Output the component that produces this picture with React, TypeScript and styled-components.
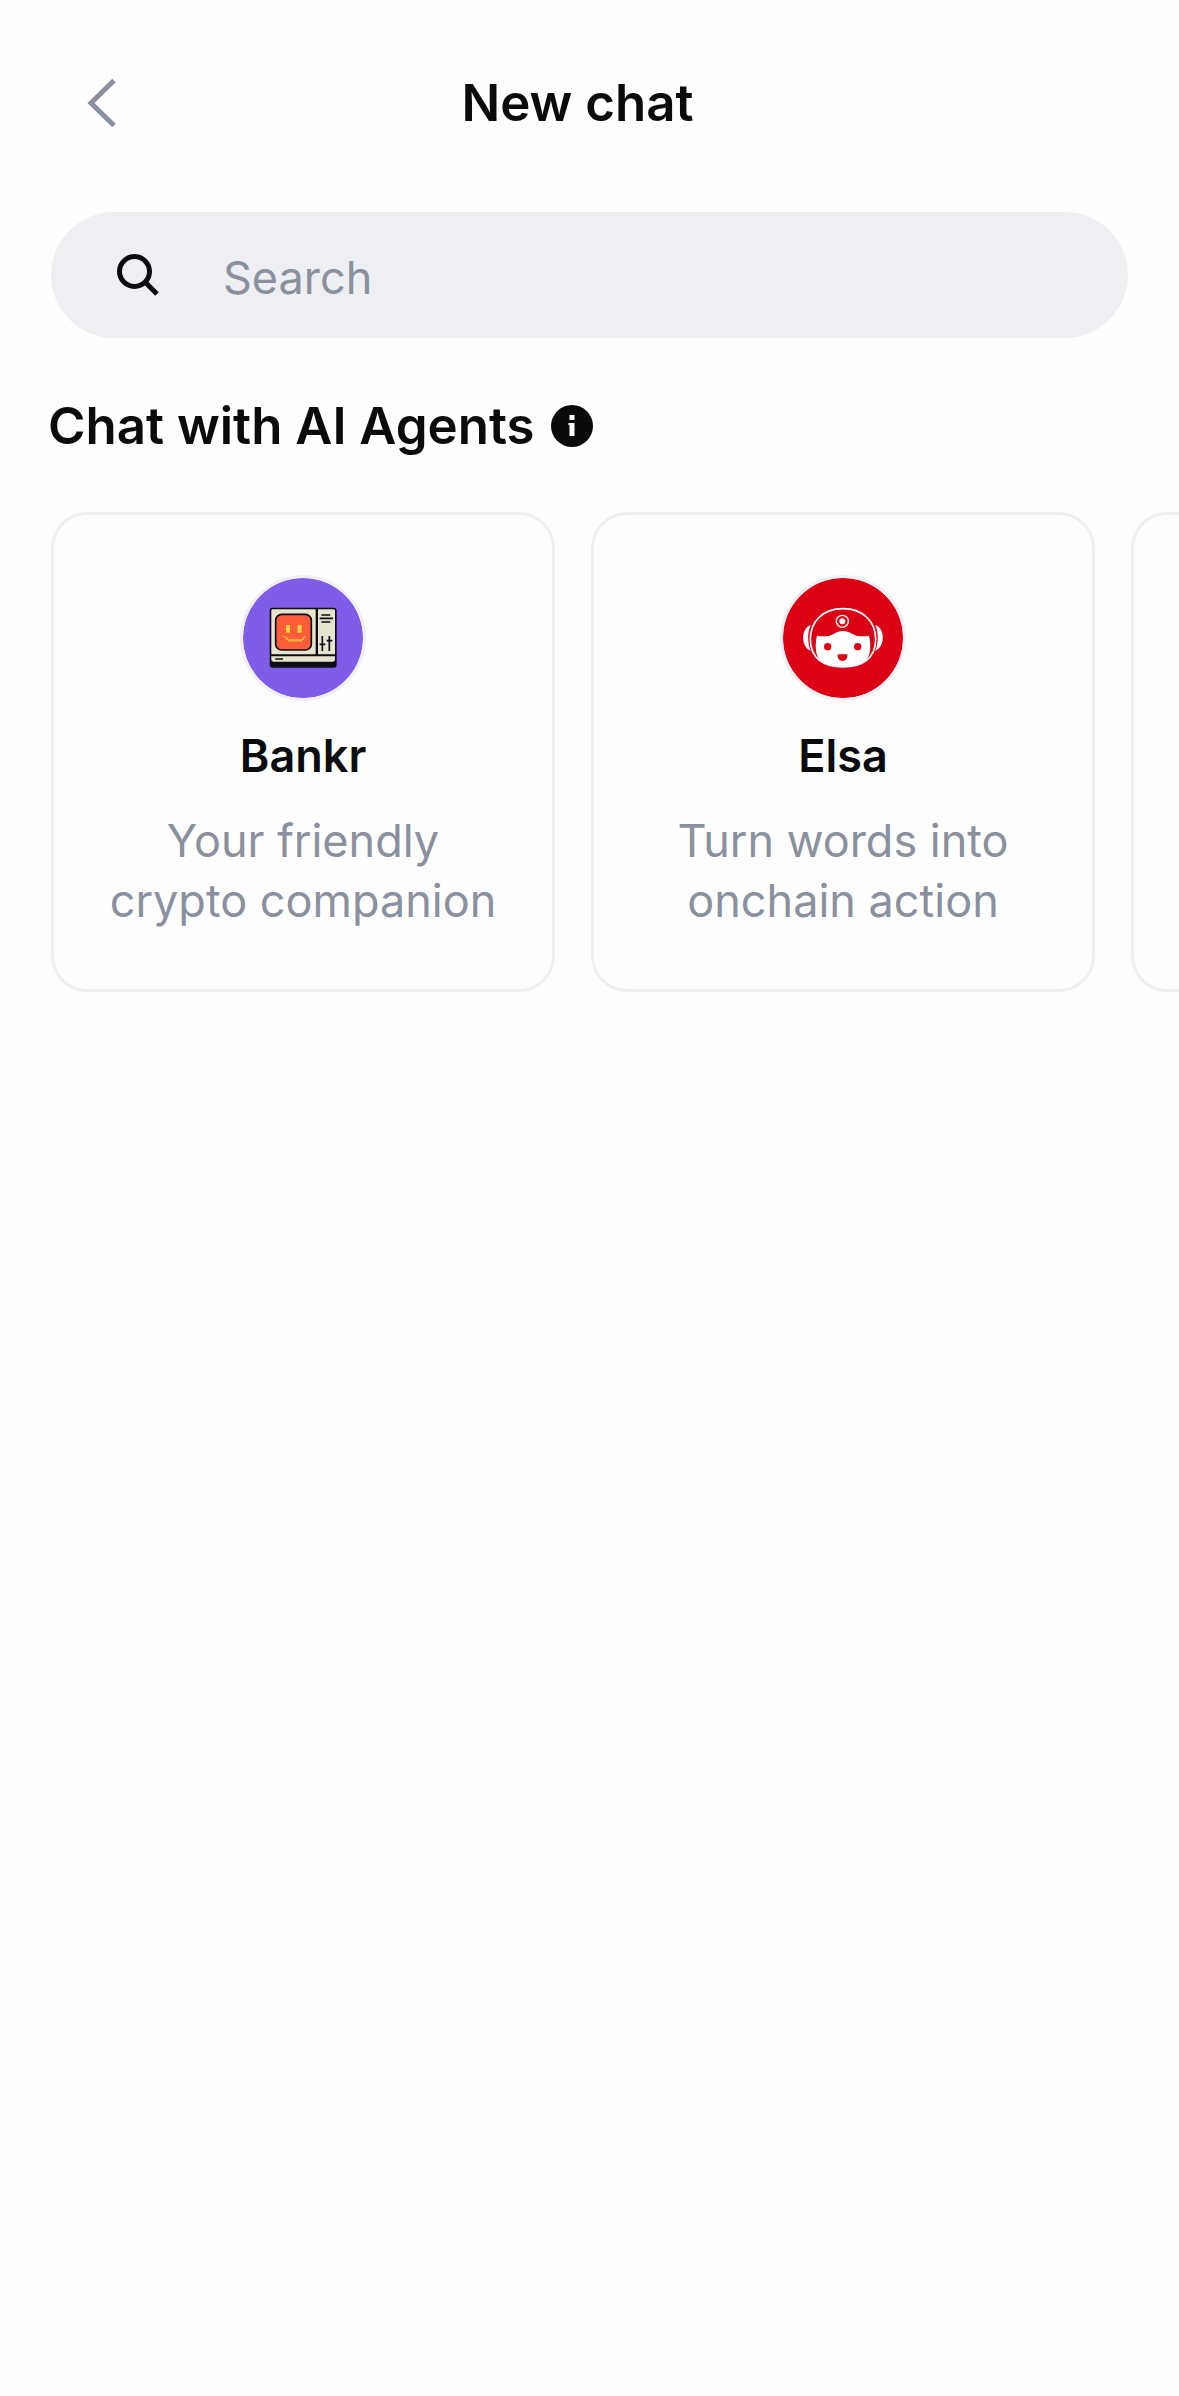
import React, { useState } from "react";
import styled, { createGlobalStyle } from "styled-components";

const GlobalStyle = createGlobalStyle`
  * {
    box-sizing: border-box;
  }

  body {
    margin: 0;
    background: #fefefe;
    color: #0a0b0d;
    font-family: Inter, "Liberation Sans", sans-serif;
    overflow-x: hidden;
  }
`;

const Page = styled.main`
  display: flex;
  flex-direction: column;
`;

const Header = styled.header`
  display: flex;
  align-items: center;
  padding: 70px 75px 76px 51px;
`;

const BackButton = styled.button`
  display: flex;
  align-items: center;
  justify-content: center;
  width: 102px;
  height: 66px;
  padding: 0;
  border: none;
  background: none;
  cursor: pointer;
`;

const Title = styled.h1`
  flex: 1;
  margin: 0;
  padding-right: 102px;
  font-size: 51px;
  line-height: 66px;
  font-weight: 600;
  text-align: center;
`;

const SearchBar = styled.label`
  display: flex;
  align-items: center;
  gap: 64px;
  height: 126px;
  margin: 0 51px;
  padding: 0 66px;
  border-radius: 63px;
  background: #eeeff3;
`;

const SearchInput = styled.input`
  flex: 1;
  min-width: 0;
  padding: 6px 0 0;
  border: none;
  background: none;
  color: #0a0b0d;
  font-family: inherit;
  font-size: 45px;
  line-height: 60px;

  &::placeholder {
    color: #8a909e;
    opacity: 1;
  }

  &:focus {
    outline: none;
  }
`;

const SectionHeader = styled.div`
  display: flex;
  align-items: center;
  gap: 16px;
  padding: 55px 48px 53px;
`;

const SectionTitle = styled.h2`
  margin: 0;
  font-size: 51px;
  line-height: 66px;
  font-weight: 600;
`;

const InfoButton = styled.button`
  display: flex;
  padding: 0;
  border: none;
  background: none;
  cursor: pointer;
`;

const AgentList = styled.ul`
  display: flex;
  gap: 36px;
  margin: 0;
  padding: 0 51px;
  list-style: none;
  overflow-x: auto;
  scrollbar-width: none;
`;

const AgentItem = styled.li`
  flex: none;
  display: flex;
  width: 504px;
`;

const AgentCard = styled.button`
  display: flex;
  flex: 1;
  flex-direction: column;
  align-items: center;
  gap: 25px;
  min-height: 480px;
  padding: 60px 48px 58px;
  border: 3px solid #f0f0f1;
  border-radius: 36px;
  background: none;
  color: inherit;
  font-family: inherit;
  font-size: 45px;
  line-height: 60px;
  text-align: center;
  cursor: pointer;
`;

const Avatar = styled.span<{ $color: string }>`
  display: flex;
  width: 126px;
  height: 126px;
  border: 3px solid #f0eff7;
  border-radius: 50%;
  background: ${(props) => props.$color};
  background-clip: padding-box;
`;

const AgentName = styled.span`
  font-weight: 600;
`;

const AgentText = styled.span`
  color: #8a909e;
`;

const BackIcon = () => (
  <svg width="30" height="50" viewBox="0 0 30 50" fill="none" aria-hidden="true">
    <path d="M27 2.5 4 25 27 47.5" stroke="#8a909e" strokeWidth="5" />
  </svg>
);

const SearchIcon = () => (
  <svg width="42" height="42" viewBox="0 0 42 42" fill="none" aria-hidden="true">
    <circle cx="17.5" cy="17.5" r="15" stroke="#0a0b0d" strokeWidth="5" />
    <path d="M28 28 40 40" stroke="#0a0b0d" strokeWidth="5" />
  </svg>
);

const InfoIcon = () => (
  <svg width="42" height="42" viewBox="0 0 42 42" aria-hidden="true">
    <circle cx="21" cy="21" r="21" fill="#0a0b0d" />
    <path d="M18.5 10h5v5h-5zM17.5 18h6v13h-5V20h-1z" fill="#fff" />
  </svg>
);

const BankrLogo = () => (
  <svg width="120" height="120" viewBox="0 0 360 360" fill="none" aria-hidden="true">
    <rect x="80" y="89" width="201" height="180" rx="9" fill="#0b0d12" />
    <path d="M87 94h131v135H85V97zM225 94h49l2 3v132h-51zM85 235h191v12l-5 4H90l-5-4z" fill="#e6e3ce" />
    <rect x="98" y="109" width="107" height="107" rx="18" fill="#ff5c39" stroke="#0b0d12" strokeWidth="5" />
    <path d="M129 141h12v23h-12zM164 141h12v23h-12z" fill="#ffd23f" />
    <path
      d="M118 174h6v5h5v6h6v5h42v-5h5v-6h5v-5h-5v5h-5v5h-6v0h-36v-5h-6v-5h-6z"
      fill="#ffb63b"
      stroke="#ffb63b"
      strokeWidth="1"
    />
    <path
      d="M235 111h27M230 121h40M235 132h27M238 174v45M230 199h17M259 174v45M251 188h17M97 243h23"
      stroke="#0b0d12"
      strokeWidth="5"
    />
  </svg>
);

const ElsaLogo = () => (
  <svg width="120" height="120" viewBox="0 0 360 360" fill="none" aria-hidden="true">
    <path
      d="M83 141c-30 10-30 66 0 77-10-26-10-52 0-77zM277 141c30 10 30 66 0 77 10-26 10-52 0-77z"
      fill="#fff"
    />
    <path
      d="M180 92c62 0 98 40 98 92 0 56-38 83-98 83s-98-27-98-83c0-52 36-92 98-92z"
      stroke="#fff"
      strokeWidth="5"
    />
    <path
      d="M102 173c14 2 28 2 38 0 14-4 23-14 40-14s26 10 40 14c10 2 24 2 38 0 5 18 5 38 1 56-8 26-36 38-79 38s-71-12-79-38c-4-18-4-38 1-56z"
      fill="#fff"
    />
    <circle cx="178" cy="130" r="18" stroke="#fff" strokeWidth="4" />
    <circle cx="178" cy="130" r="9" fill="#fff" />
    <circle cx="134" cy="206" r="11" fill="#dc0014" />
    <circle cx="224" cy="206" r="11" fill="#dc0014" />
    <path d="M164 229h29v6c0 8-6 14-14 14s-15-6-15-14z" fill="#dc0014" />
  </svg>
);

interface Agent {
  id: string;
  name: string;
  description: string;
  color: string;
  logo: React.ReactNode;
}

const agents: Agent[] = [
  {
    id: "bankr",
    name: "Bankr",
    description: "Your friendly crypto companion",
    color: "#805de8",
    logo: <BankrLogo />,
  },
  {
    id: "elsa",
    name: "Elsa",
    description: "Turn words into onchain action",
    color: "#dc0014",
    logo: <ElsaLogo />,
  },
];

const App: React.FC = () => {
  const [query, setQuery] = useState("");

  return (
    <Page>
      <GlobalStyle />
      <Header>
        <BackButton aria-label="Back">
          <BackIcon />
        </BackButton>
        <Title>New chat</Title>
      </Header>

      <SearchBar>
        <SearchIcon />
        <SearchInput
          type="text"
          aria-label="Search"
          placeholder="Search"
          value={query}
          onChange={(event) => setQuery(event.target.value)}
        />
      </SearchBar>

      <SectionHeader>
        <SectionTitle>Chat with AI Agents</SectionTitle>
        <InfoButton aria-label="About AI Agents">
          <InfoIcon />
        </InfoButton>
      </SectionHeader>

      <AgentList>
        {agents.map((agent) => (
          <AgentItem key={agent.id}>
            <AgentCard>
              <Avatar $color={agent.color}>{agent.logo}</Avatar>
              <AgentName>{agent.name}</AgentName>
              <AgentText>{agent.description}</AgentText>
            </AgentCard>
          </AgentItem>
        ))}
        <AgentItem>
          <AgentCard aria-label="More agents" />
        </AgentItem>
      </AgentList>
    </Page>
  );
};

export default App;
